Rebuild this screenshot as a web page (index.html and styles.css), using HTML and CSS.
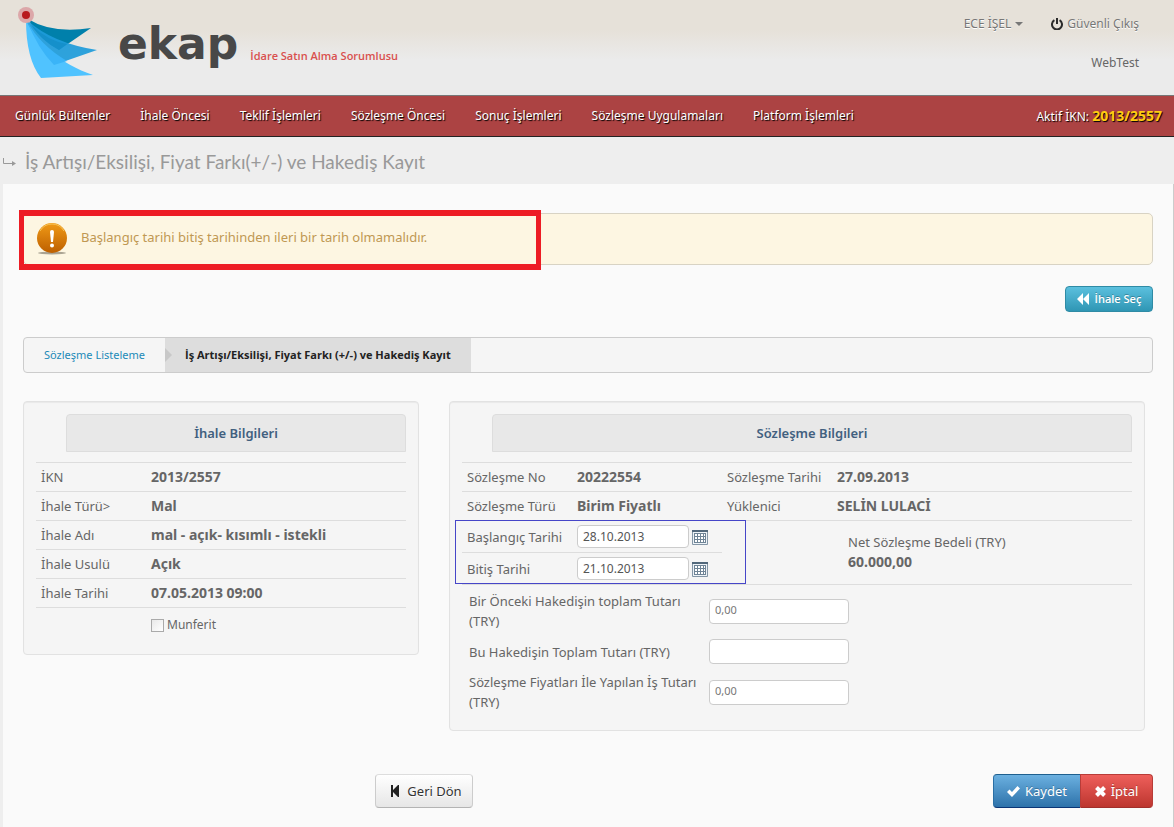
FILE: index.html
```html
<!DOCTYPE html>
<html lang="tr">
<head>
<meta charset="utf-8">
<title>EKAP - İş Artışı/Eksilişi, Fiyat Farkı ve Hakediş Kayıt</title>
<link rel="stylesheet" href="styles.css">
</head>
<body>
<header class="header">
  <div class="brand">
    <svg class="brand-mark" width="84" height="76" viewBox="0 0 84 76" aria-hidden="true">
      <path d="M12 12Q36 27 75 21L43 43Q22 32 12 12Z" fill="#0080ab"/>
      <path d="M11 13Q36 36 81 43L38 58Q20 42 10 14Z" fill="#1d9bda" fill-opacity=".92"/>
      <path d="M15 18Q32 34 51 37L43 43Q26 34 15 18Z" fill="#1590cb"/>
      <path d="M10 13C20 36 45 57 77 68L25 71Q10 52 10 13Z" fill="#50c3ff"/>
      <path d="M11 14Q24 38 51 54L38 58Q22 42 11 14Z" fill="#3ab4f8"/>
      <circle cx="10" cy="8" r="8" fill="#dca7a9"/>
      <circle cx="10" cy="8" r="4" fill="#b8191f"/>
    </svg>
    <span class="brand-name">ekap</span>
    <span class="brand-role">İdare Satın Alma Sorumlusu</span>
  </div>
  <div class="account">
    <div class="account-links">
      <a class="account-link" href="#">ECE İŞEL <svg width="8" height="4" viewBox="0 0 8 4" aria-hidden="true"><path d="M0 0h8L4 4z" fill="#777"/></svg></a>
      <a class="account-link" href="#"><svg width="12" height="12" viewBox="0 0 12 12" fill="none" stroke="#2b2b2b" stroke-width="2" aria-hidden="true"><path d="M3.400 2.200a5 5 0 1 0 5.200 0M6 0v6"/></svg> Güvenli Çıkış</a>
    </div>
    <span class="account-site">WebTest</span>
  </div>
</header>
<nav class="nav">
  <a class="nav-link" href="#">Günlük Bültenler</a>
  <a class="nav-link" href="#">İhale Öncesi</a>
  <a class="nav-link" href="#">Teklif İşlemleri</a>
  <a class="nav-link" href="#">Sözleşme Öncesi</a>
  <a class="nav-link" href="#">Sonuç İşlemleri</a>
  <a class="nav-link" href="#">Sözleşme Uygulamaları</a>
  <a class="nav-link" href="#">Platform İşlemleri</a>
  <span class="nav-active">Aktif İKN: <strong>2013/2557</strong></span>
</nav>
<div class="title-bar">
  <svg width="14" height="8" viewBox="0 0 14 8" aria-hidden="true"><path d="M.5 0v5.500H10" fill="none" stroke="#999"/><path d="M9 3l4 2.500L9 8z" fill="#999"/></svg>
  <h1 class="title">İş Artışı/Eksilişi, Fiyat Farkı(+/-) ve Hakediş Kayıt</h1>
</div>
<main class="content">
  <div class="alert" role="alert">
    <svg width="32" height="32" viewBox="0 0 32 32" aria-hidden="true">
      <defs><linearGradient id="warn" x1="0" y1="0" x2="0" y2="1"><stop offset="0" stop-color="#f09a16"/><stop offset="1" stop-color="#bd5f00"/></linearGradient></defs>
      <ellipse cx="16" cy="30" rx="14" ry="1.500" fill="#aaa392"/>
      <circle cx="16" cy="15" r="15" fill="url(#warn)"/>
      <path d="M4 8Q8 1 16 1t12 7" fill="none" stroke="#f8c458"/>
      <path d="M14 9q0-2 2-2t2 2l-1 10h-2z" fill="#fff"/><circle cx="16" cy="22.500" r="2" fill="#fff"/>
    </svg>
    <span>Başlangıç tarihi bitiş tarihinden ileri bir tarih olmamalıdır.</span>
    <i class="alert-mark"></i>
  </div>
  <div class="toolbar">
    <button class="btn btn-info" type="button"><svg width="12" height="12" viewBox="0 0 12 12" fill="#fff" aria-hidden="true"><path d="M6 0v12L0 6zM12 0v12L6 6z"/></svg>İhale Seç</button>
  </div>
  <nav class="crumbs">
    <a class="crumb" href="#">Sözleşme Listeleme</a>
    <span class="crumb crumb-current">İş Artışı/Eksilişi, Fiyat Farkı (+/-) ve Hakediş Kayıt</span>
  </nav>
  <div class="panels">
    <section class="panel">
      <h2 class="panel-title">İhale Bilgileri</h2>
      <table class="info info-lined">
        <tr><th>İKN</th><td>2013/2557</td></tr>
        <tr><th>İhale Türü&gt;</th><td>Mal</td></tr>
        <tr><th>İhale Adı</th><td>mal - açık- kısımlı - istekli</td></tr>
        <tr><th>İhale Usulü</th><td>Açık</td></tr>
        <tr><th>İhale Tarihi</th><td>07.05.2013 09:00</td></tr>
      </table>
      <label class="check"><input class="check-box" type="checkbox">Munferit</label>
    </section>
    <section class="panel">
      <h2 class="panel-title">Sözleşme Bilgileri</h2>
      <table class="info info-contract">
        <colgroup><col class="col-label"><col class="col-value"><col class="col-label"><col></colgroup>
        <tr><th>Sözleşme No</th><td>20222554</td><th>Sözleşme Tarihi</th><td>27.09.2013</td></tr>
        <tr><th>Sözleşme Türü</th><td>Birim Fiyatlı</td><th>Yüklenici</th><td>SELİN LULACİ</td></tr>
        <tr>
          <td class="dates-cell" colspan="2">
            <div class="date-row"><label class="date-label" for="start">Başlangıç Tarihi</label><input class="date-input" id="start" type="text" value="28.10.2013"><button class="cal" type="button" aria-label="Takvim"><svg width="16" height="15" viewBox="0 0 16 15" aria-hidden="true"><path d="M.5.500h15v14H.5z" fill="#eef3f7" stroke="#8496a6"/><path d="M0 0h16v2H0z" fill="#52687b"/><path d="M2 3h12v10H2z" fill="#6f8496"/><path d="M3 4h2v2H3zm3 0h2v2H6zm3 0h2v2H9zm3 0h1v2h-1zM3 7h2v2H3zm3 0h2v2H6zm3 0h2v2H9zm3 0h1v2h-1zM3 10h2v2H3zm3 0h2v2H6zm3 0h2v2H9zm3 0h1v2h-1z" fill="#fff"/></svg></button></div>
            <div class="date-row"><label class="date-label" for="end">Bitiş Tarihi</label><input class="date-input" id="end" type="text" value="21.10.2013"><button class="cal" type="button" aria-label="Takvim"><svg width="16" height="15" viewBox="0 0 16 15" aria-hidden="true"><path d="M.5.500h15v14H.5z" fill="#eef3f7" stroke="#8496a6"/><path d="M0 0h16v2H0z" fill="#52687b"/><path d="M2 3h12v10H2z" fill="#6f8496"/><path d="M3 4h2v2H3zm3 0h2v2H6zm3 0h2v2H9zm3 0h1v2h-1zM3 7h2v2H3zm3 0h2v2H6zm3 0h2v2H9zm3 0h1v2h-1zM3 10h2v2H3zm3 0h2v2H6zm3 0h2v2H9zm3 0h1v2h-1z" fill="#fff"/></svg></button></div>
            <i class="dates-mark"></i>
          </td>
          <td class="net-cell" colspan="2"><span class="net-label">Net Sözleşme Bedeli (TRY)</span>60.000,00</td>
        </tr>
      </table>
      <div class="amounts">
        <label class="amount-label" for="previous">Bir Önceki Hakedişin toplam Tutarı (TRY)</label><input class="amount-input" id="previous" type="text" value="0,00">
        <label class="amount-label" for="current">Bu Hakedişin Toplam Tutarı (TRY)</label><input class="amount-input" id="current" type="text">
        <label class="amount-label" for="work">Sözleşme Fiyatları İle Yapılan İş Tutarı (TRY)</label><input class="amount-input" id="work" type="text" value="0,00">
      </div>
    </section>
  </div>
  <div class="actions">
    <button class="btn btn-back" type="button"><svg width="8" height="12" viewBox="0 0 8 12" fill="#222" aria-hidden="true"><path d="M0 0h2v5l5-5h1v12H7L2 7v5H0z"/></svg>Geri Dön</button>
    <div class="btn-group">
      <button class="btn btn-save" type="submit"><svg width="13" height="11" viewBox="0 0 13 11" fill="#fff" aria-hidden="true"><path d="M0 6l2.500-2.500L5 6l5.500-6L13 2.500 5 11z"/></svg>Kaydet</button>
      <button class="btn btn-cancel" type="button"><svg width="11" height="11" viewBox="0 0 11 11" aria-hidden="true"><path d="M1.500 1.500l8 8M9.500 1.500l-8 8" stroke="#fff" stroke-width="4"/></svg>İptal</button>
    </div>
  </div>
</main>
</body>
</html>
```
FILE: styles.css
```css
* { box-sizing: border-box; }
body {
  margin: 0;
  min-height: 100vh;
  display: flex;
  flex-direction: column;
  background: #eee;
  color: #666;
  font: 13px/20px "Noto Sans", "Open Sans", sans-serif;
}
svg { flex: none; }
a { text-decoration: none; }
button, input { font-family: inherit; }

.header {
  display: flex;
  justify-content: space-between;
  height: 95px;
  padding: 7px 35px 0 16px;
  background: linear-gradient(#e6e1d9 30px, #ebebeb 60px);
}
.brand { display: flex; align-items: flex-start; }
.brand-name {
  margin: 12px 12px 0 18px;
  color: #484848;
  font: bold 44px/50px "DejaVu Sans", sans-serif;
}
.brand-role {
  margin-top: 39px;
  color: #d9504e;
  font: 600 11px/20px "Open Sans", sans-serif;
}
.account {
  display: flex;
  flex-direction: column;
  align-items: flex-end;
  gap: 19px;
  padding-top: 7px;
  font-size: 12px;
}
.account-links { display: flex; gap: 28px; }
.account-link {
  display: flex;
  align-items: center;
  gap: 4px;
  color: #777;
  text-shadow: 0 1px 0 #fff;
}
.nav {
  display: flex;
  align-items: center;
  height: 42px;
  padding: 0 12px 0 0;
  border-top: 1px solid #777;
  border-bottom: 1px solid #222;
  background: #ac4343;
  color: #fff;
  text-shadow: 1px 1px 1px #000;
}
.nav-link { padding: 0 15px; color: #fff; font-size: 12px; white-space: nowrap; }
.nav-active { margin-left: auto; font-size: 12px; white-space: nowrap; }
.nav-active strong { color: #fc1; font-size: 14px; }

.title-bar { display: flex; align-items: center; gap: 8px; height: 47px; padding: 3px 3px 0; }
.title {
  margin: 0;
  color: #999;
  font: 19px/32px Lato, sans-serif;
}

.content {
  flex: 1;
  margin-left: 3px;
  padding: 29px 20px 19px;
  border-right: 1px solid #ccc;
  background: #fafafa;
}
.alert {
  position: relative;
  display: flex;
  gap: 13px;
  height: 52px;
  padding: 9px 12px;
  border: 1px solid #d8d3c4;
  border-radius: 5px;
  background: #fdf6e2;
  color: #c09853;
}
.alert span { padding-top: 4px; }
.alert-mark {
  position: absolute;
  top: -4px;
  left: -5px;
  width: 522px;
  height: 60px;
  border: 6px solid #ed1c24;
  border-left-width: 5px;
  border-right-width: 5px;
}
.toolbar { display: flex; justify-content: flex-end; margin: 21px 0 25px; }
.btn {
  display: inline-flex;
  align-items: center;
  justify-content: center;
  gap: 5px;
  height: 34px;
  padding: 0;
  border: 1px solid;
  border-radius: 4px;
  color: #fff;
  font-size: 13px;
  text-shadow: 0 -1px 0 rgba(0, 0, 0, .25);
}
.btn-info {
  gap: 6px;
  width: 88px;
  height: 26px;
  border-color: #2f8ba5;
  background: linear-gradient(#5bc0de, #2f96b4);
  font: 600 11px/20px "Open Sans", sans-serif;
}
.crumbs {
  display: flex;
  height: 36px;
  border: 1px solid #ccc;
  border-radius: 4px;
  background: #f5f5f5;
  font-size: 11px;
  line-height: 34px;
}
.crumb { padding: 0 20px; color: #1c8ab8; white-space: nowrap; }
.crumb-current {
  position: relative;
  background: #ddd;
  color: #222;
  font: bold 11px/34px "Open Sans", sans-serif;
}
.crumb-current::before {
  position: absolute;
  top: 10px;
  left: 0;
  border: 7px solid transparent;
  border-left-color: #c8c8c8;
  border-right-width: 0;
  content: "";
}

.panels {
  display: grid;
  grid-template-columns: 396fr 696fr;
  align-items: start;
  gap: 30px;
  margin: 28px 8px 0 0;
}
.panel {
  padding: 12px;
  border: 1px solid #e2e2e2;
  border-radius: 4px;
  background: #f5f5f5;
  box-shadow: inset 0 1px 1px rgba(0, 0, 0, .05);
}
.panel-title {
  margin: 0 0 10px 30px;
  border: 1px solid #ddd;
  border-radius: 4px 4px 0 0;
  background: #e8e8e8;
  color: #41607f;
  font-size: 13px;
  font-weight: 600;
  line-height: 36px;
  text-align: center;
}
.info { width: 100%; border-collapse: separate; border-spacing: 0; table-layout: fixed; }
.info th, .info td {
  padding: 4px 5px;
  border-top: 1px solid #ddd;
  font-size: 14px;
  font-weight: bold;
  line-height: 20px;
  text-align: left;
  vertical-align: top;
}
.info th { width: 110px; font-size: 13px; font-weight: normal; }
.info-lined tr:last-child > * { border-bottom: 1px solid #ddd; }
.col-label { width: 110px; }
.col-value { width: 150px; }
.check {
  display: flex;
  align-items: center;
  gap: 3px;
  margin: 7px 0 7px 115px;
  font-size: 12px;
}
.check-box {
  width: 13px;
  height: 13px;
  margin: 0;
  border: 1px solid #aaa;
  background: linear-gradient(135deg, #e8e8e8, #fff);
  appearance: none;
}
.info-contract { border-bottom: 1px solid #ddd; }
.info .dates-cell { position: relative; padding: 0; font-size: 13px; font-weight: normal; }
.date-row { display: flex; align-items: center; height: 31px; padding-left: 5px; }
.date-row + .date-row { height: 32px; border-top: 1px solid #ddd; }
.date-label { width: 110px; }
.date-input, .amount-input {
  border: 1px solid #ccc;
  border-radius: 4px;
  background: #fff;
  color: #555;
}
.date-input { width: 112px; height: 23px; padding: 0 5px; font-size: 12px; }
.cal { display: flex; margin: 2px 0 0 3px; padding: 0; border: 0; background: none; }
.dates-mark {
  position: absolute;
  top: -1px;
  right: -24px;
  bottom: 0;
  left: -7px;
  border: 1px solid #4646c8;
  pointer-events: none;
}
.info .net-cell { padding: 11px 5px 11px 126px; }
.net-label { display: block; font-size: 13px; font-weight: normal; }
.amounts {
  display: grid;
  grid-template-columns: 232px 140px;
  align-items: center;
  gap: 8px;
  padding: 6px 0 6px 7px;
}
.amount-label { max-width: 230px; }
.amount-input { height: 25px; padding: 0 5px 4px; color: #777; font-size: 11px; }

.actions { display: flex; justify-content: space-between; margin-top: 43px; padding-left: 352px; }
.btn-back {
  gap: 8px;
  width: 98px;
  padding-left: 5px;
  border-color: #ddd #ccc #b3b3b3;
  background: linear-gradient(#fff, #e6e6e6);
  color: #333;
  text-shadow: 0 1px 1px #fff;
}
.btn-group { display: flex; }
.btn-save {
  width: 87px;
  border-color: #1e5f8e #2a6fa5 #0a3576;
  border-right: 0;
  border-radius: 4px 0 0 4px;
  background: linear-gradient(#6bb0e0, #2d72aa);
}
.btn-cancel {
  width: 73px;
  border-color: #b83c38 #b83c38 #a12f2b;
  border-radius: 0 4px 4px 0;
  background: linear-gradient(#ee5f5b, #bd362f);
}
```
